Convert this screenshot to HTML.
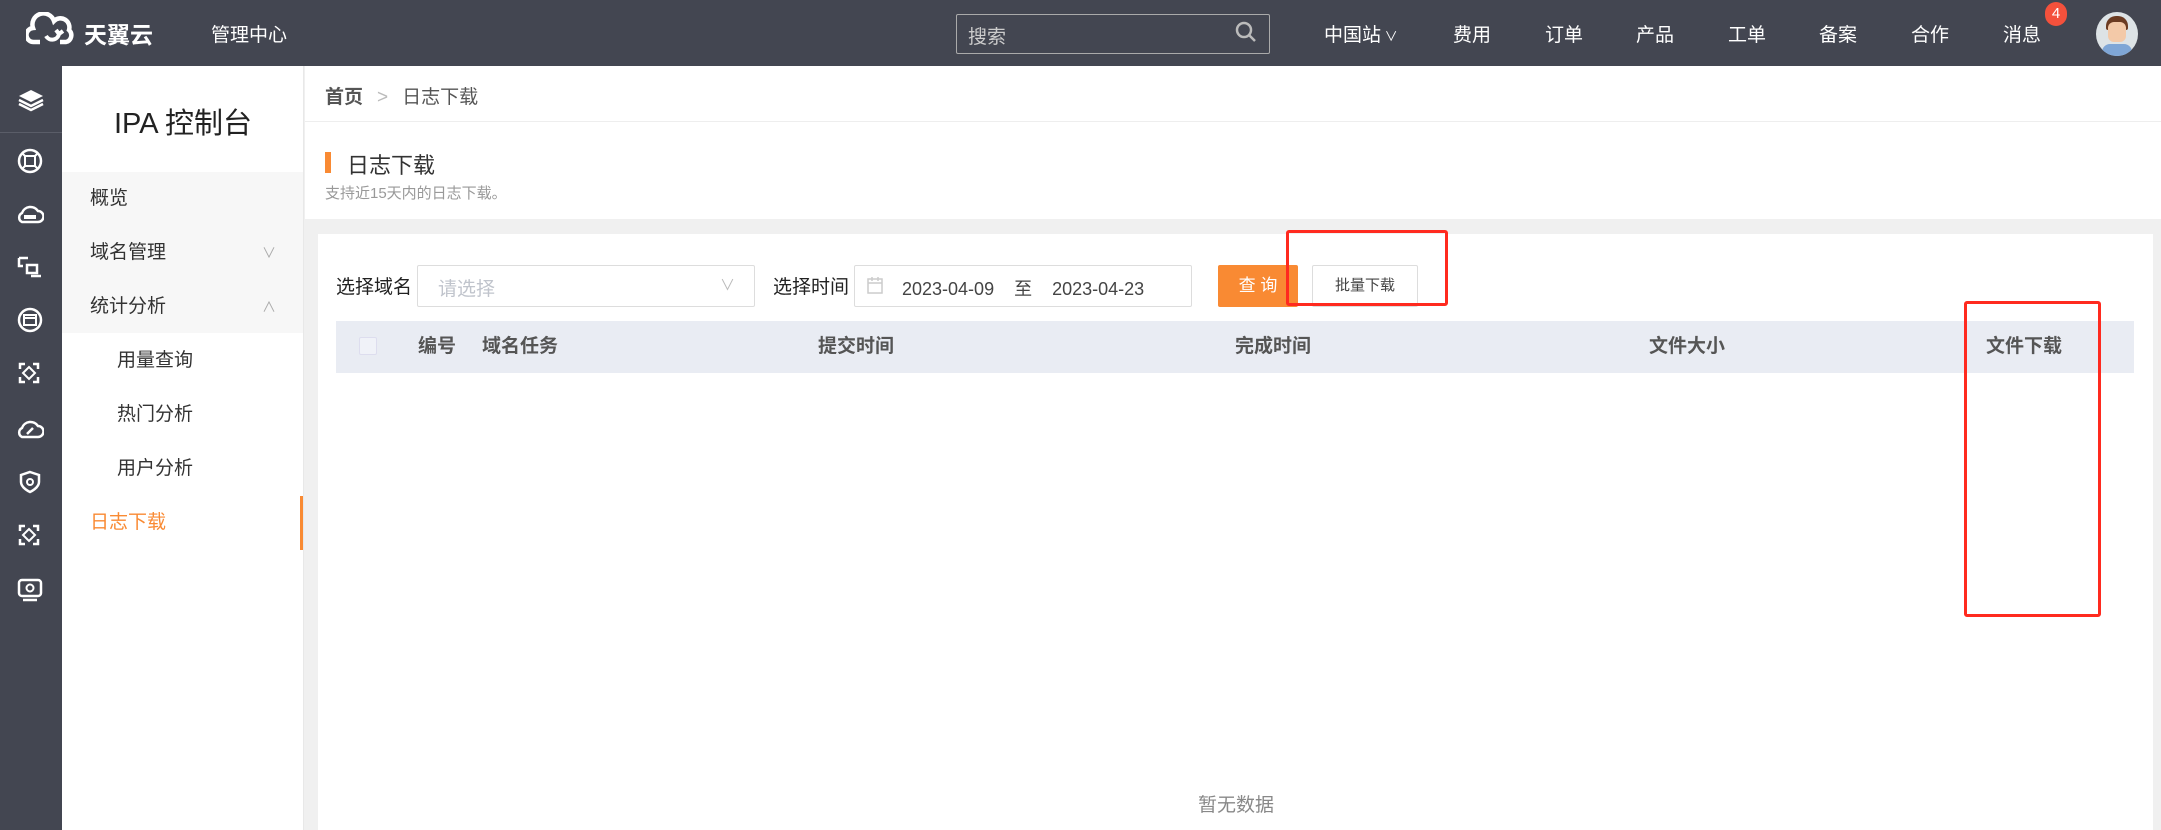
<!DOCTYPE html>
<html><head><meta charset="utf-8">
<style>
*{margin:0;padding:0;box-sizing:border-box}
body{width:2161px;height:830px;overflow:hidden;background:#f0f0f0;font-family:"Liberation Sans","Noto Sans CJK SC",sans-serif;position:relative}
.a{position:absolute;white-space:nowrap}
#top{left:0;top:0;width:2161px;height:66px;background:#434651}
#ib{left:0;top:66px;width:62px;height:764px;background:#434651}
#sb{left:62px;top:66px;width:242px;height:764px;background:#fff;border-right:1px solid #e8e8e8}
.nav{color:#fff;font-size:19px;top:20px}
.mi{left:0;width:242px;height:54px;font-size:19px;color:#333;line-height:54px}
.ico{left:16px;width:30px;height:30px}
.th{top:321px;font-size:19px;font-weight:bold;color:#555;line-height:52px}
</style></head><body>
<div id="top" class="a"></div>
<svg class="a" style="left:26px;top:12px" width="50" height="34" viewBox="0 0 50 34"><path d="M14 30 H8 A7 7 0 0 1 7 16 A11 11 0 0 1 28 9 A9 9 0 0 1 43 18 A7 7 0 0 1 40 30 H34" fill="none" stroke="#fff" stroke-width="4.5"/><path d="M20 24 A7 7 0 0 0 33 22 M30 18 l3 4 4 -3" fill="none" stroke="#fff" stroke-width="4"/></svg>
<div class="a" style="left:84px;top:16px;color:#fff;font-size:23px;font-weight:bold">天翼云</div>
<div class="a nav" style="left:211px">管理中心</div>
<div class="a" style="left:956px;top:14px;width:314px;height:40px;border:1px solid #aaa;border-radius:2px"></div>
<div class="a" style="left:968px;top:22px;color:#ccc;font-size:19px">搜索</div>
<svg class="a" style="left:1234px;top:20px" width="24" height="24"><circle cx="10" cy="10" r="7" fill="none" stroke="#bbb" stroke-width="2.5"/><path d="M15 15 L21 21" stroke="#bbb" stroke-width="2.5"/></svg>
<div class="a nav" style="left:1324px">中国站<span style="font-size:13px"> ∨</span></div>
<div class="a nav" style="left:1453px">费用</div>
<div class="a nav" style="left:1545px">订单</div>
<div class="a nav" style="left:1636px">产品</div>
<div class="a nav" style="left:1728px">工单</div>
<div class="a nav" style="left:1819px">备案</div>
<div class="a nav" style="left:1911px">合作</div>
<div class="a nav" style="left:2003px">消息</div>
<div class="a" style="left:2045px;top:2px;width:22px;height:24px;border-radius:11px;background:#f4513c;color:#fff;font-size:15px;text-align:center;line-height:24px">4</div>
<div class="a" style="left:2096px;top:12px;width:42px;height:44px;border-radius:50%;background:#dde3e6;overflow:hidden"><div style="position:absolute;left:10px;top:4px;width:22px;height:14px;background:#6b3b22;border-radius:10px 10px 2px 2px"></div><div style="position:absolute;left:12px;top:10px;width:18px;height:20px;background:#f3c9a8;border-radius:6px"></div><div style="position:absolute;left:6px;top:32px;width:30px;height:14px;background:#7fa6d6;border-radius:8px 8px 0 0"></div></div>

<div id="ib" class="a"></div>
<div class="a" style="left:0;top:132px;width:62px;height:1px;background:#5a5d68"></div>
<svg class="a" style="left:17px;top:88px" width="28" height="24"><path d="M14 2 L26 8 L14 14 L2 8Z" fill="#fff"/><path d="M2 12 L14 18 L26 12 M2 16 L14 22 L26 16" fill="none" stroke="#fff" stroke-width="2.5"/></svg>
<svg class="a" style="left:17px;top:148px" width="26" height="26"><circle cx="13" cy="13" r="11" fill="none" stroke="#fff" stroke-width="2.5"/><path d="M8 8 h10 v10 h-10z M8 8 l-2 -2 M18 8 l2 -2 M8 18 l-2 2 M18 18 l2 2" fill="none" stroke="#fff" stroke-width="2"/></svg>
<svg class="a" style="left:16px;top:203px" width="28" height="22"><path d="M6 19 A5 5 0 0 1 6 10 A9 9 0 0 1 22 8 A5.5 5.5 0 0 1 22 19Z" fill="none" stroke="#fff" stroke-width="2.5"/><rect x="8" y="12" width="12" height="4" fill="#fff"/></svg>
<svg class="a" style="left:17px;top:255px" width="26" height="24"><path d="M2 3 h9 M2 3 v8 h4 M10 10 h10 v8 h-10z M14 21 h10" fill="none" stroke="#fff" stroke-width="2.5"/></svg>
<svg class="a" style="left:17px;top:307px" width="26" height="26"><circle cx="13" cy="13" r="11" fill="none" stroke="#fff" stroke-width="2.5"/><rect x="7" y="8" width="12" height="10" fill="none" stroke="#fff" stroke-width="2"/><path d="M7 11 h12" stroke="#fff" stroke-width="2"/></svg>
<svg class="a" style="left:18px;top:362px" width="22" height="22"><path d="M2 7 V2 H7 M15 2 H20 V7 M20 15 V20 H15 M7 20 H2 V15" fill="none" stroke="#fff" stroke-width="2.5"/><path d="M11 5 L17 11 L11 17 L5 11Z" fill="none" stroke="#fff" stroke-width="2"/></svg>
<svg class="a" style="left:16px;top:418px" width="28" height="22"><path d="M6 19 A5 5 0 0 1 6 10 A9 9 0 0 1 22 8 A5.5 5.5 0 0 1 22 19Z" fill="none" stroke="#fff" stroke-width="2.5"/><path d="M11 16 L17 10" stroke="#fff" stroke-width="2.5"/></svg>
<svg class="a" style="left:19px;top:470px" width="22" height="24"><path d="M11 2 L20 5 V12 C20 18 11 22 11 22 C11 22 2 18 2 12 V5Z" fill="none" stroke="#fff" stroke-width="2.5"/><circle cx="11" cy="12" r="3" fill="none" stroke="#fff" stroke-width="2"/></svg>
<svg class="a" style="left:18px;top:524px" width="22" height="22"><path d="M2 7 V2 H7 M15 2 H20 V7 M20 15 V20 H15 M7 20 H2 V15" fill="none" stroke="#fff" stroke-width="2.5"/><path d="M11 5 L17 11 L11 17 L5 11Z" fill="none" stroke="#fff" stroke-width="2"/></svg>
<svg class="a" style="left:17px;top:578px" width="26" height="24"><rect x="2" y="2" width="22" height="16" rx="3" fill="none" stroke="#fff" stroke-width="2.5"/><circle cx="13" cy="10" r="3.5" fill="none" stroke="#fff" stroke-width="2"/><path d="M6 22 h14" stroke="#fff" stroke-width="2.5"/></svg>

<div id="sb" class="a">
<div class="a" style="left:0;top:34px;width:242px;text-align:center;font-size:29px;color:#222">IPA 控制台</div>
<div class="a" style="left:0;top:106px;width:241px;height:161px;background:#f7f7f7"></div>
<div class="a mi" style="top:106px;padding-left:28px">概览</div>
<div class="a mi" style="top:160px;padding-left:28px">域名管理<span style="position:absolute;left:200px;color:#aaa;font-size:14px">∨</span></div>
<div class="a mi" style="top:214px;padding-left:28px">统计分析<span style="position:absolute;left:200px;color:#aaa;font-size:14px">∧</span></div>
<div class="a mi" style="top:268px;padding-left:55px">用量查询</div>
<div class="a mi" style="top:322px;padding-left:55px">热门分析</div>
<div class="a mi" style="top:376px;padding-left:55px">用户分析</div>
<div class="a mi" style="top:430px;padding-left:28px;color:#f98a33;border-right:3px solid #f98a33;width:241px">日志下载</div>
</div>

<div class="a" style="left:305px;top:66px;width:1856px;height:153px;background:#fff"></div>
<div class="a" style="left:305px;top:121px;width:1856px;height:1px;background:#eee"></div>
<div class="a" style="left:325px;top:82px;font-size:19px;color:#555"><b>首页</b><span style="color:#bbb;margin:0 14px">&gt;</span>日志下载</div>
<div class="a" style="left:325px;top:152px;width:6px;height:21px;background:#f98a33"></div>
<div class="a" style="left:347px;top:148px;font-size:22px;color:#333">日志下载</div>
<div class="a" style="left:325px;top:182px;font-size:15px;color:#999">支持近15天内的日志下载。</div>

<div class="a" style="left:318px;top:234px;width:1835px;height:596px;background:#fff"></div>
<div class="a" style="left:336px;top:272px;font-size:19px;color:#222">选择域名</div>
<div class="a" style="left:417px;top:265px;width:338px;height:42px;border:1px solid #ddd;border-radius:2px"></div>
<div class="a" style="left:438px;top:274px;font-size:19px;color:#c0c4cc">请选择</div>
<div class="a" style="left:720px;top:274px;font-size:15px;color:#bbb">∨</div>
<div class="a" style="left:773px;top:272px;font-size:19px;color:#222">选择时间</div>
<div class="a" style="left:854px;top:265px;width:338px;height:42px;border:1px solid #ddd;border-radius:2px"></div>
<svg class="a" style="left:867px;top:276px" width="16" height="18"><rect x="1" y="3" width="14" height="14" fill="none" stroke="#ccc" stroke-width="1.5"/><path d="M1 7 h14 M5 1 v4 M11 1 v4" stroke="#ccc" stroke-width="1.5"/></svg>
<div class="a" style="left:902px;top:275px;font-size:18px;color:#444">2023-04-09<span style="margin:0 20px">至</span>2023-04-23</div>
<div class="a" style="left:1218px;top:265px;width:80px;height:42px;background:#f98a33;color:#fff;font-size:17px;text-align:center;line-height:42px;border-radius:2px">查 询</div>
<div class="a" style="left:1312px;top:265px;width:106px;height:42px;border:1px solid #ddd;color:#444;font-size:15px;text-align:center;line-height:40px;border-radius:2px">批量下载</div>

<div class="a" style="left:336px;top:321px;width:1798px;height:52px;background:#e9ecf3"></div>
<div class="a" style="left:359px;top:337px;width:18px;height:18px;border:1px solid #dde;background:#f0f2f8;border-radius:2px"></div>
<div class="a th" style="left:418px">编号</div>
<div class="a th" style="left:482px">域名任务</div>
<div class="a th" style="left:818px">提交时间</div>
<div class="a th" style="left:1235px">完成时间</div>
<div class="a th" style="left:1649px">文件大小</div>
<div class="a th" style="left:1986px">文件下载</div>
<div class="a" style="left:1198px;top:790px;font-size:19px;color:#888">暂无数据</div>

<div class="a" style="left:1286px;top:230px;width:162px;height:76px;border:3px solid #ff2a1f;border-radius:3px"></div>
<div class="a" style="left:1964px;top:301px;width:137px;height:316px;border:3px solid #ff2a1f;border-radius:3px"></div>
</body></html>
